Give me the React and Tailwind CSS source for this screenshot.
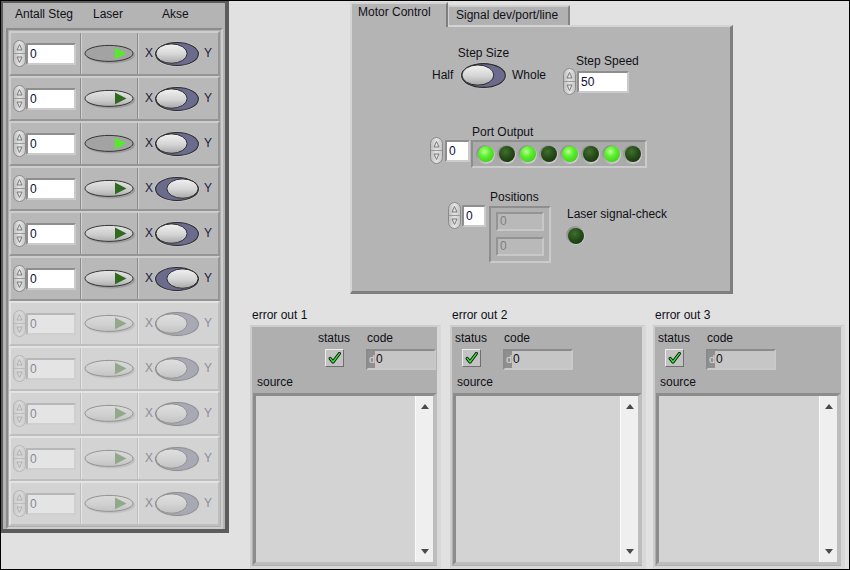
import React from "react";

const rows = [
  { on: true, right: false },
  { on: false, right: false },
  { on: true, right: false },
  { on: false, right: true },
  { on: false, right: false },
  { on: false, right: true },
  { dim: true },
  { dim: true },
  { dim: true },
  { dim: true },
  { dim: true },
];

const ports = [true, false, true, false, true, false, true, false];

function Defs() {
  return (
    <svg width="0" height="0" className="absolute">
      <defs>
        <linearGradient id="knob" x1="0" y1="0" x2="0" y2="1">
          <stop offset="0" stopColor="#f2f2f2" />
          <stop offset="0.55" stopColor="#d4d4d4" />
          <stop offset="1" stopColor="#a8a8a8" />
        </linearGradient>
        <linearGradient id="btn" x1="0" y1="0" x2="0" y2="1">
          <stop offset="0" stopColor="#e6e6e6" />
          <stop offset="0.6" stopColor="#cbcbcb" />
          <stop offset="1" stopColor="#adadad" />
        </linearGradient>
        <linearGradient id="pill" x1="0" y1="0" x2="1" y2="0">
          <stop offset="0" stopColor="#bdbdbd" />
          <stop offset="0.5" stopColor="#e4e4e4" />
          <stop offset="1" stopColor="#c4c4c4" />
        </linearGradient>
      </defs>
    </svg>
  );
}

function IncDec() {
  return (
    <svg width="13" height="27" viewBox="0 0 13 27" className="block shrink-0">
      <rect x="0.5" y="0.5" width="12" height="26" rx="6" fill="url(#pill)" stroke="#8a8a8a" />
      <line x1="1" y1="13.5" x2="12" y2="13.5" stroke="#9a9a9a" />
      <path d="M6.5 4.5 L9 10 H4 Z" fill="none" stroke="#727272" strokeWidth="0.9" strokeLinejoin="round" />
      <path d="M6.5 22.5 L9 17 H4 Z" fill="none" stroke="#727272" strokeWidth="0.9" strokeLinejoin="round" />
    </svg>
  );
}

function NumBox({ w, value }) {
  return (
    <div
      className={`flex items-center h-[22px] ${w} border-2 border-t-[#8e8e8e] border-l-[#8e8e8e] border-b-[#cbcbcb] border-r-[#cbcbcb] bg-white pl-[2px] leading-[14px] text-[#0c0c3a]`}
    >
      {value}
    </div>
  );
}

function Toggle({ right, w = 46, h = 26 }) {
  return (
    <svg width={w} height={h} viewBox="0 0 46 26" preserveAspectRatio="none" className="block shrink-0">
      <g transform={right ? "translate(46 0) scale(-1 1)" : undefined}>
        <ellipse cx="23" cy="13" rx="22.6" ry="12.6" fill="#cacaca" />
        <ellipse cx="23" cy="13" rx="21.4" ry="11.5" fill="#6b6b8d" stroke="#2a2a2a" strokeWidth="1.1" />
        <ellipse cx="17.5" cy="12.6" rx="15.6" ry="9.7" fill="url(#knob)" stroke="#222" strokeWidth="0.9" />
      </g>
    </svg>
  );
}

function LaserBtn({ on }) {
  return (
    <svg width="52" height="20" viewBox="0 0 52 20" className="block">
      <ellipse cx="26.5" cy="11" rx="24.5" ry="8.4" fill="#858585" opacity="0.55" />
      <ellipse cx="25" cy="9.4" rx="24" ry="8" fill={on ? "#a3a3a3" : "url(#btn)"} stroke="#363636" strokeWidth="1" />
      <polygon points="31,3.6 42.5,9.4 31,15.2" fill={on ? "#55ea2b" : "#2f6a1e"} />
    </svg>
  );
}

function Led({ on }) {
  return (
    <div className="w-[19px] h-[19px] rounded-full p-[1.5px] bg-[linear-gradient(135deg,#7e7e7e,#e2e2e2)] shrink-0">
      <div
        className={`w-full h-full rounded-full ${
          on
            ? "bg-[radial-gradient(circle_at_40%_35%,#b8ff90_0%,#5aee2c_38%,#34c212_100%)]"
            : "bg-[radial-gradient(circle_at_40%_35%,#40702e_0%,#244a17_50%,#132b0b_100%)]"
        }`}
      />
    </div>
  );
}

function ArrayRow({ on, right, dim }) {
  return (
    <div
      className={`flex h-[45px] border-2 ${
        dim
          ? "bg-[#d3d3d3] border-t-[#e3e3e3] border-l-[#e3e3e3] border-b-[#bebebe] border-r-[#bebebe]"
          : "bg-[#b8b8b8] border-t-[#cdcdcd] border-l-[#cdcdcd] border-b-[#959595] border-r-[#959595]"
      }`}
    >
      <div className={`flex items-center w-[70px] pl-[2px] border-r ${dim ? "border-r-[#bfbfbf]" : "border-r-[#8c8c8c]"}`}>
        <div className={`flex items-center ${dim ? "opacity-40" : ""}`}>
          <IncDec />
          <NumBox w="w-[50px]" value="0" />
        </div>
      </div>
      <div
        className={`flex items-center justify-center w-[57px] border-l border-r ${
          dim ? "border-l-[#e4e4e4] border-r-[#bfbfbf]" : "border-l-[#d0d0d0] border-r-[#8c8c8c]"
        }`}
      >
        <div className={dim ? "opacity-40" : ""}>
          <LaserBtn on={on} />
        </div>
      </div>
      <div className={`flex flex-1 items-center pl-[6px] border-l ${dim ? "border-l-[#e4e4e4]" : "border-l-[#d0d0d0]"}`}>
        <div className={`flex items-center text-[#1a1a40] ${dim ? "opacity-40" : ""}`}>
          <span className="w-[8px]">X</span>
          <span className="ml-[1px]">
            <Toggle right={right} />
          </span>
          <span className="ml-[4px]">Y</span>
        </div>
      </div>
    </div>
  );
}

function Check() {
  return (
    <div className="w-[19px] h-[18px] bg-[#c3c3c3] border border-t-[#ececec] border-l-[#ececec] border-b-[#6f6f6f] border-r-[#6f6f6f] flex items-center justify-center">
      <svg width="13" height="12" viewBox="0 0 13 12">
        <path d="M2.2 6.4 L5 10 L11.3 1.6" fill="none" stroke="#111" strokeWidth="3.2" strokeLinecap="round" strokeLinejoin="round" />
        <path d="M2.2 6.4 L5 10 L11.3 1.6" fill="none" stroke="#2ee62e" strokeWidth="1.5" strokeLinecap="round" strokeLinejoin="round" />
      </svg>
    </div>
  );
}

function ErrorCluster({ label, w, boxW, statusMl }) {
  return (
    <div className="flex flex-col">
      <span className="ml-[2px] leading-[13px]">{label}</span>
      <div
        className={`mt-[3px] ${w} h-[244px] bg-[#afafaf] border-l-2 border-t-2 border-r-4 border-b-[3px] border-l-[#cdcdcd] border-t-[#cdcdcd] border-r-[#d8d8d8] border-b-[#d8d8d8]`}
      >
        <div className={`flex items-start mt-[5px] ${statusMl}`}>
          <div className="flex flex-col items-center w-[34px]">
            <span className="leading-[13px]">status</span>
            <div className="mt-[4px]">
              <Check />
            </div>
          </div>
          <div className="flex flex-col ml-[15px]">
            <span className="ml-[1px] leading-[13px]">code</span>
            <div className="mt-[4px] flex w-[70px] h-[21px] border-2 border-t-[#8b8b8b] border-l-[#8b8b8b] border-b-[#c9c9c9] border-r-[#c9c9c9] bg-[#c6c6c6]">
              <span className="w-[7px] bg-[#8f8f8f] text-[#dadada] text-[11px] leading-[17px] pl-[1px]">d</span>
              <span className="leading-[17px] pl-[1px] text-[#111]">0</span>
            </div>
          </div>
        </div>
        <span className="block ml-[5px] mt-[6px] leading-[13px]">source</span>
        <div
          className={`ml-[1px] mt-[4px] flex h-[172px] ${boxW} border-t-[3px] border-l-[3px] border-r-4 border-b-[3px] border-t-[#8c8c8c] border-l-[#8c8c8c] border-r-[#bdbdbd] border-b-[#bdbdbd] bg-[#d3d3d3]`}
        >
          <div className="flex-1" />
          <div className="w-[18px] bg-[#efefef] border-l border-l-[#fafafa] flex flex-col items-center justify-between py-[8px]">
            <svg width="8" height="5" viewBox="0 0 8 5">
              <path d="M4 0 L8 5 H0 Z" fill="#4a4a4a" />
            </svg>
            <svg width="8" height="5" viewBox="0 0 8 5">
              <path d="M0 0 H8 L4 5 Z" fill="#4a4a4a" />
            </svg>
          </div>
        </div>
      </div>
    </div>
  );
}

export default function App() {
  return (
    <div className="relative flex items-start w-[850px] h-[570px] overflow-hidden border border-black bg-[#e1e1e1] text-[12px] leading-[13px] text-[#101018] font-['Liberation_Sans',Arial,sans-serif]">
      <Defs />

      {/* Array panel */}
      <div className="w-[228px] h-[532px] shrink-0 bg-[#b4b4b4] border-l-2 border-t-2 border-r-4 border-b-4 border-[#5c5c5c]">
        <div className="flex h-[25px] pt-[4px] leading-[15px]">
          <span className="ml-[12px] w-[78px]">Antall Steg</span>
          <span className="w-[69px]">Laser</span>
          <span>Akse</span>
        </div>
        <div className="ml-[3px] w-[217px] p-[1px] bg-[#b0b0b0] border-2 border-t-[#8c8c8c] border-l-[#8c8c8c] border-b-[#cdcdcd] border-r-[#cdcdcd]">
          {rows.map((r, i) => (
            <ArrayRow key={i} {...r} />
          ))}
        </div>
      </div>

      {/* Right side */}
      <div className="flex flex-col flex-1">
        {/* Tab control */}
        <div className="ml-[121px] mt-[1px] w-[383px]">
          <div className="flex items-end h-[23px]">
            <div className="relative z-10 w-[98px] h-[25px] mb-[-2px] bg-[#b4b4b4] border-l-2 border-t-2 border-r-2 border-l-[#d4d4d4] border-t-[#d4d4d4] border-r-[#7e7e7e] rounded-tl-[2px] pl-[6px] pt-[2px]">
              Motor Control
            </div>
            <div className="w-[122px] h-[20px] bg-[#b1b1b1] border-l border-t-2 border-r-2 border-l-[#d0d0d0] border-t-[#d0d0d0] border-r-[#858585] pl-[7px] pt-[2px]">
              Signal dev/port/line
            </div>
          </div>
          <div className="h-[269px] bg-[#b4b4b4] border-t-2 border-l-2 border-r-[3px] border-b-[3px] border-t-[#d4d4d4] border-l-[#d4d4d4] border-r-[#7e7e7e] border-b-[#7e7e7e]">
            {/* Step size / speed */}
            <div className="flex items-start ml-[80px] mt-[19px]">
              <div className="flex flex-col">
                <div className="flex justify-center ml-[28px] w-[47px] h-[15px] leading-[15px] whitespace-nowrap">
                  Step Size
                </div>
                <div className="flex items-center mt-[1px]">
                  <span className="w-[28px]">Half</span>
                  <Toggle w={47} h={27} />
                  <span className="ml-[5px]">Whole</span>
                </div>
              </div>
              <div className="flex flex-col ml-[17px] mt-[9px]">
                <span className="ml-[13px]">Step Speed</span>
                <div className="flex items-center">
                  <IncDec />
                  <div className="ml-[1px]">
                    <NumBox w="w-[52px]" value="50" />
                  </div>
                </div>
              </div>
            </div>

            {/* Port output */}
            <div className="flex items-start ml-[78px] mt-[31px]">
              <div className="flex items-center mt-[11px]">
                <IncDec />
                <div className="ml-[2px]">
                  <NumBox w="w-[25px]" value="0" />
                </div>
              </div>
              <div className="flex flex-col ml-[1px]">
                <span className="ml-[1px]">Port Output</span>
                <div className="mt-[1px] flex items-center gap-[2px] w-[176px] h-[28px] pl-[3px] bg-[#aaaaaa] border-2 border-t-[#8e8e8e] border-l-[#8e8e8e] border-b-[#cbcbcb] border-r-[#cbcbcb]">
                  {ports.map((p, i) => (
                    <Led key={i} on={p} />
                  ))}
                </div>
              </div>
            </div>

            {/* Positions / laser check */}
            <div className="flex items-start ml-[96px] mt-[23px]">
              <div className="flex items-center mt-[11px]">
                <IncDec />
                <div className="ml-[1px]">
                  <NumBox w="w-[24px]" value="0" />
                </div>
              </div>
              <div className="flex flex-col ml-[3px]">
                <span className="ml-[1px]">Positions</span>
                <div className="mt-[2px] w-[62px] h-[57px] pl-[5px] pt-[4px] bg-[#b0b0b0] border-2 border-t-[#8e8e8e] border-l-[#8e8e8e] border-b-[#cbcbcb] border-r-[#cbcbcb] flex flex-col gap-[6px]">
                  <div className="w-[48px] h-[19px] border-2 border-t-[#949494] border-l-[#949494] border-b-[#c8c8c8] border-r-[#c8c8c8] bg-[#b9b9b9] pl-[2px] leading-[15px] text-[#808080]">
                    0
                  </div>
                  <div className="w-[48px] h-[19px] border-2 border-t-[#949494] border-l-[#949494] border-b-[#c8c8c8] border-r-[#c8c8c8] bg-[#b9b9b9] pl-[2px] leading-[15px] text-[#808080]">
                    0
                  </div>
                </div>
              </div>
              <div className="flex flex-col ml-[15px] mt-[17px]">
                <span className="ml-[1px] whitespace-nowrap">Laser signal-check</span>
                <div className="mt-[5px]">
                  <Led on={false} />
                </div>
              </div>
            </div>
          </div>
        </div>

        {/* Error clusters */}
        <div className="flex ml-[21px] mt-[15px]">
          <ErrorCluster label="error out 1" w="w-[191px]" boxW="w-[184px]" statusMl="ml-[65px]" />
          <div className="ml-[9px]">
            <ErrorCluster label="error out 2" w="w-[196px]" boxW="w-[189px]" statusMl="ml-[2px]" />
          </div>
          <div className="ml-[7px]">
            <ErrorCluster label="error out 3" w="w-[192px]" boxW="w-[185px]" statusMl="ml-[2px]" />
          </div>
        </div>
      </div>
    </div>
  );
}
